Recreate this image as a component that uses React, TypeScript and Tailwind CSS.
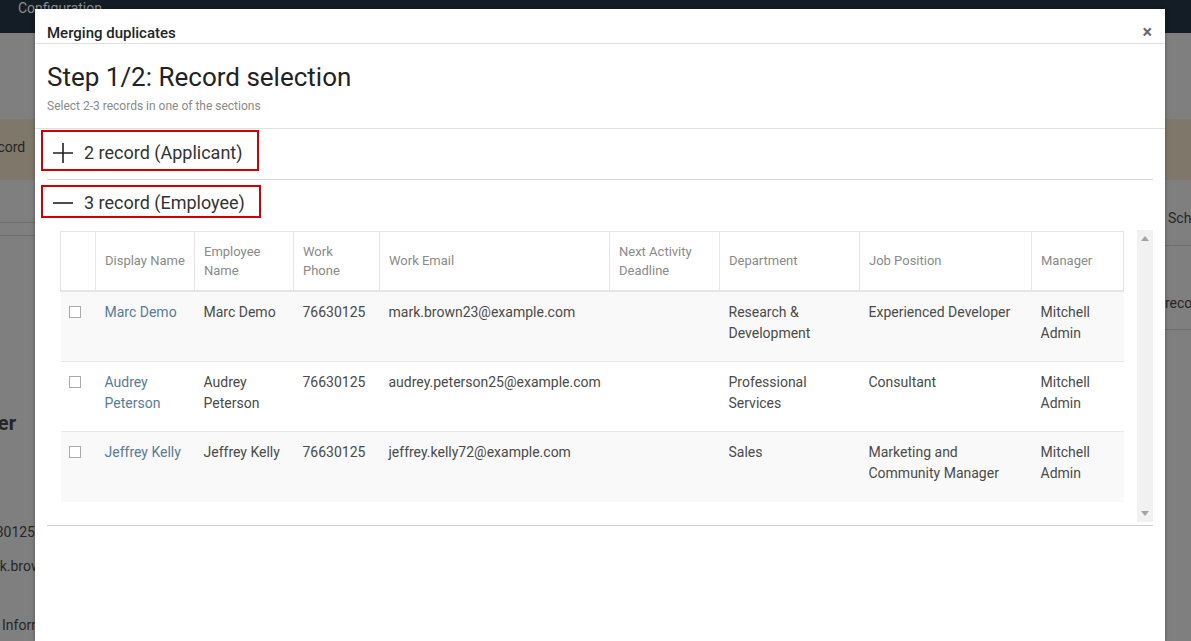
import React from 'react';

const rows = [
  {
    display: 'Marc Demo',
    name: 'Marc Demo',
    phone: '76630125',
    email: 'mark.brown23@example.com',
    dept: 'Research & Development',
    job: 'Experienced Developer',
    manager: 'Mitchell Admin',
  },
  {
    display: 'Audrey Peterson',
    name: 'Audrey Peterson',
    phone: '76630125',
    email: 'audrey.peterson25@example.com',
    dept: 'Professional Services',
    job: 'Consultant',
    manager: 'Mitchell Admin',
  },
  {
    display: 'Jeffrey Kelly',
    name: 'Jeffrey Kelly',
    phone: '76630125',
    email: 'jeffrey.kelly72@example.com',
    dept: 'Sales',
    job: 'Marketing and Community Manager',
    manager: 'Mitchell Admin',
  },
];

const headers = [
  { label: '', w: 'w-[35px]' },
  { label: 'Display Name', w: 'w-[99px]' },
  { label: 'Employee Name', w: 'w-[99px]' },
  { label: 'Work Phone', w: 'w-[86px]' },
  { label: 'Work Email', w: 'w-[230px]' },
  { label: 'Next Activity Deadline', w: 'w-[110px]' },
  { label: 'Department', w: 'w-[140px]' },
  { label: 'Job Position', w: 'w-[172px]' },
  { label: 'Manager', w: 'w-[92px]' },
];

function PlusIcon() {
  return (
    <svg width="20" height="20" viewBox="0 0 20 20" className="shrink-0">
      <path d="M10 0V20M0 10H20" stroke="#222" strokeWidth="1.6" />
    </svg>
  );
}

function MinusIcon() {
  return (
    <svg width="20" height="20" viewBox="0 0 20 20" className="shrink-0">
      <path d="M0 10H20" stroke="#222" strokeWidth="1.6" />
    </svg>
  );
}

function Background() {
  return (
    <div className="min-h-screen bg-[#7f7f7f] text-[#262626]">
      <div className="h-[33px] bg-[#141c25] pl-[18px] text-[14px] leading-[16px] text-[#8b9096]">
        Configuration
      </div>
      <div className="h-[86px]" />
      <div className="h-[61px] bg-[#7f776a] flex items-center pb-[4px] text-[14px]">
        <span className="ml-[-46px] whitespace-nowrap">New record</span>
      </div>
      <div className="flex">
        <div className="w-[35px] overflow-hidden">
          <div className="h-[43px] border-b border-[#6e6e6e]" />
          <div className="h-[13px] border-b border-[#6e6e6e]" />
          <div className="h-[173px]" />
          <div className="flex justify-end pr-[19px] text-[20px] leading-[28px] font-bold whitespace-nowrap">
            Manager
          </div>
          <div className="h-[85px]" />
          <div className="flex justify-end text-[14px] leading-[20px] whitespace-nowrap">76630125</div>
          <div className="h-[14px]" />
          <div className="ml-[-25px] text-[14px] leading-[20px] whitespace-nowrap">mark.brown23@example.com</div>
          <div className="h-[39px]" />
          <div className="ml-[2px] text-[14px] leading-[20px] whitespace-nowrap">Information</div>
        </div>
        <div className="flex-1" />
        <div className="w-[26px] overflow-hidden">
          <div className="h-[28px]" />
          <div className="flex items-center text-[14px] leading-[20px] whitespace-nowrap">
            <span className="ml-[-6px] w-[10px] h-[10px] rounded-full border-2 border-[#262626]" />
            <span className="ml-[5px]">Schedule</span>
          </div>
          <div className="h-[18px] border-b border-[#6e6e6e]" />
          <div className="h-[47px]" />
          <div className="text-[14px] leading-[20px] whitespace-nowrap">record</div>
          <div className="h-[17px] border-b border-[#6e6e6e]" />
        </div>
      </div>
    </div>
  );
}

function RecordsTable() {
  return (
    <table className="table-fixed border-collapse w-[1063px]">
      <colgroup>
        {headers.map((h, i) => (
          <col key={i} className={h.w} />
        ))}
      </colgroup>
      <thead>
        <tr className="h-[59px]">
          {headers.map((h, i) => (
            <th
              key={i}
              className={`border border-[#e6e6e6] border-b-2 border-b-[#e2e5e9] px-[9px] text-left align-middle font-normal text-[13px] leading-[19px] text-[#8a8a8a] ${
                i === 1 ? 'whitespace-nowrap' : ''
              }`}
            >
              {h.label}
            </th>
          ))}
        </tr>
      </thead>
      <tbody className="text-[14px] leading-[21px] text-[#4a4a4a]">
        {rows.map((r, i) => (
          <tr
            key={i}
            className={`align-top ${i % 2 === 0 ? 'bg-[#f9f9f9]' : 'bg-white'} ${
              i > 0 ? 'h-[70px] border-t border-[#e8e8e8]' : 'h-[71px]'
            }`}
          >
            <td className="pl-[8px] pt-[14px]">
              <div className="w-[12px] h-[12px] border border-[#aaaaaa] bg-white" />
            </td>
            <td className="pl-[9px] pr-[5px] pt-[10px] text-[#587c94]">{r.display}</td>
            <td className="pl-[9px] pr-[5px] pt-[10px]">{r.name}</td>
            <td className="pl-[9px] pr-[5px] pt-[10px]">{r.phone}</td>
            <td className="pl-[9px] pr-[2px] pt-[10px]">{r.email}</td>
            <td className="pl-[9px] pr-[5px] pt-[10px]" />
            <td className="pl-[9px] pr-[14px] pt-[10px]">{r.dept}</td>
            <td className="pl-[9px] pr-[5px] pt-[10px]">{r.job}</td>
            <td className="pl-[9px] pr-[10px] pt-[10px]">{r.manager}</td>
          </tr>
        ))}
      </tbody>
    </table>
  );
}

function MergeDialog() {
  return (
    <div className="absolute left-[35px] top-[9px] w-[1130px] h-[632px] bg-white shadow-[0_0_4px_rgba(0,0,0,0.35)] text-[#212529]">
      <div className="flex items-start justify-between border-b border-[#e0e0e0] pl-[12px] pr-[13px] pt-[14px]">
        <h4 className="text-[15px] leading-[20px] font-medium">Merging duplicates</h4>
        <span className="text-[18px] leading-[18px] font-bold text-[#6b6b6b]">×</span>
      </div>

      <div className="pl-[12px] pt-[18px]">
        <h2 className="text-[26px] leading-[31px] font-normal text-[#222]">Step 1/2: Record selection</h2>
        <p className="mt-[4px] text-[12px] leading-[18px] text-[#8a8a8a]">Select 2-3 records in one of the sections</p>
      </div>

      <div className="mt-[13px] border-t border-[#e0e0e0] pt-[1px]">
        <div className="ml-[6px] w-[218px] h-[41px] border-2 border-[#d10000] flex items-center gap-[11px] pl-[10px] pt-[4px]">
          <PlusIcon />
          <span className="text-[18px] leading-[22px] text-[#333]">2 record (Applicant)</span>
        </div>

        <div className="mx-[12px] mt-[8px] border-t border-[#d6d6d6]" />

        <div className="ml-[6px] mt-[5px] w-[220px] h-[33px] border-2 border-[#d10000] flex items-center gap-[11px] pl-[10px] pt-[2px]">
          <MinusIcon />
          <span className="text-[18px] leading-[22px] text-[#333]">3 record (Employee)</span>
        </div>

        <div className="mt-[12px] ml-[25px] mr-[12px] flex h-[292px]">
          <div className="pt-[1px]">
            <RecordsTable />
          </div>
          <div className="ml-auto w-[16px] bg-[#f1f1f1] flex flex-col justify-between items-center py-[6px]">
            <svg width="8" height="5" viewBox="0 0 8 5">
              <path d="M4 0L8 5H0Z" fill="#a3a3a3" />
            </svg>
            <svg width="8" height="5" viewBox="0 0 8 5">
              <path d="M0 0H8L4 5Z" fill="#a3a3a3" />
            </svg>
          </div>
        </div>

        <div className="mx-[12px] mt-[3px] border-t border-[#cccccc]" />
      </div>
    </div>
  );
}

export default function App() {
  return (
    <div className="relative h-[641px] overflow-hidden font-['Roboto',sans-serif]">
      <Background />
      <MergeDialog />
    </div>
  );
}
